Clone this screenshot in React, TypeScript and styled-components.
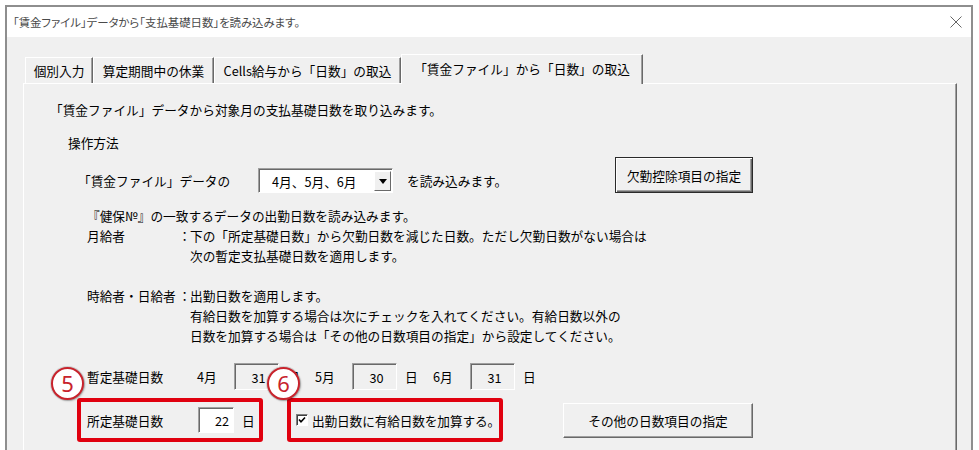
import React from "react";
import styled, { createGlobalStyle, css } from "styled-components";

const GlobalStyle = createGlobalStyle`
  html, body {
    margin: 0;
    padding: 0;
    background: #ffffff;
    width: 979px;
    height: 450px;
    overflow: hidden;
  }
  body {
    font-family: "Noto Sans CJK JP", "Noto Sans", sans-serif;
    color: #000;
  }
`;

const Page = styled.div`
  padding: 5px 6px 0 5px;
  height: 450px;
  box-sizing: border-box;
  overflow: hidden;
`;

const Window = styled.div`
  border: 2px solid #8e8e8e;
  border-bottom: none;
  height: 445px;
  display: flex;
  flex-direction: column;
  background: #f0f0f0;
  box-sizing: border-box;
`;

const TitleBar = styled.div`
  height: 30px;
  flex: none;
  background: #ffffff;
  display: flex;
  align-items: center;
  justify-content: space-between;
  padding: 0 9px 0 6px;
`;

const TitleText = styled.span`
  font-size: 11.4px;
  color: #4a4a4a;
  font-feature-settings: "palt";
  white-space: nowrap;
`;

const CloseIcon = () => (
  <svg width="12" height="12" viewBox="0 0 12 12">
    <path d="M0.5 0.5 L11.5 11.5 M11.5 0.5 L0.5 11.5" stroke="#666" strokeWidth="1" fill="none" />
  </svg>
);

const Body = styled.div`
  flex: 1;
  min-height: 0;
  padding: 17px 14px 0 16px;
  display: flex;
  flex-direction: column;
`;

const TabStrip = styled.div`
  display: flex;
  align-items: flex-end;
  height: 29px;
  flex: none;
  padding-left: 2px;
  position: relative;
  z-index: 1;
`;

const Tab = styled.div<{ $w: number; $active?: boolean }>`
  width: ${(p) => p.$w}px;
  height: ${(p) => (p.$active ? 30 : 26)}px;
  margin-bottom: ${(p) => (p.$active ? -1 : 0)}px;
  box-sizing: border-box;
  border-top: 1px solid #ffffff;
  border-left: 1px solid #ffffff;
  border-right: 1px solid #696969;
  box-shadow: inset -1px 0 #a0a0a0;
  background: #f0f0f0;
  font-size: 12.7px;
  display: flex;
  align-items: ${(p) => (p.$active ? "flex-start" : "center")};
  padding-top: ${(p) => (p.$active ? 4 : 0)}px;
  justify-content: center;
  white-space: nowrap;
`;

const Panel = styled.div`
  flex: 1;
  min-height: 0;
  width: 934px;
  box-sizing: border-box;
  border-top: 1px solid #ffffff;
  border-left: 1px solid #ffffff;
  border-right: 1px solid #696969;
  box-shadow: inset -1px 0 #a0a0a0;
  padding: 16px 0 0 26px;
  font-size: 12.7px;
`;

const Line = styled.div<{ $indent: number; $top?: number }>`
  margin-left: ${(p) => p.$indent}px;
  margin-top: ${(p) => p.$top ?? 0}px;
  height: 20px;
  line-height: 20px;
  white-space: nowrap;
`;

const SourceRow = styled.div`
  display: flex;
  align-items: flex-end;
  margin-left: 28px;
  margin-top: 4px;
  height: 36px;
`;

const InlineText = styled.span<{ $w?: number; $ml?: number }>`
  display: inline-block;
  ${(p) => (p.$w ? `width: ${p.$w}px;` : "")}
  margin-left: ${(p) => p.$ml ?? 0}px;
  height: 25px;
  line-height: 25px;
  white-space: nowrap;
`;

const Dropdown = styled.div`
  width: 135px;
  height: 25px;
  box-sizing: border-box;
  border-top: 1px solid #a0a0a0;
  border-left: 1px solid #a0a0a0;
  border-right: 1px solid #ffffff;
  border-bottom: 1px solid #ffffff;
  box-shadow: inset 1px 1px #696969;
  background: #ffffff;
  display: flex;
  align-items: center;
  justify-content: space-between;
  padding: 1px 1px 0 13px;
`;

const DropButton = styled.div`
  width: 17px;
  height: 20px;
  box-sizing: border-box;
  background: #f0f0f0;
  border-top: 1px solid #ffffff;
  border-left: 1px solid #ffffff;
  border-right: 1px solid #696969;
  border-bottom: 1px solid #696969;
  display: flex;
  align-items: center;
  justify-content: center;
`;

const ArrowDown = () => (
  <svg width="8" height="5" viewBox="0 0 8 5">
    <path d="M0 0 L8 0 L4 5 Z" fill="#000" />
  </svg>
);

const Button = styled.div<{ $w: number; $h: number; $default?: boolean; $ml?: number }>`
  width: ${(p) => p.$w}px;
  height: ${(p) => p.$h}px;
  margin-left: ${(p) => p.$ml ?? 0}px;
  box-sizing: border-box;
  background: #f0f0f0;
  display: flex;
  align-items: center;
  justify-content: center;
  font-size: 12.7px;
  white-space: nowrap;
  ${(p) =>
    p.$default
      ? css`
          border: 1px solid #2a2a2a;
          box-shadow: inset 1px 1px #ffffff, inset -1px -1px #696969, inset -2px -2px #a0a0a0;
        `
      : css`
          border-top: 1px solid #ffffff;
          border-left: 1px solid #ffffff;
          border-right: 1px solid #696969;
          border-bottom: 1px solid #696969;
          box-shadow: inset -1px -1px #a0a0a0;
        `}
`;

const DescGrid = styled.div`
  display: grid;
  grid-template-columns: 92px 11px auto;
  grid-auto-rows: 20px;
  line-height: 20px;
  margin-left: 37px;
  margin-top: 13px;
  white-space: nowrap;
`;

const FullRow = styled.div`
  grid-column: 1 / 4;
`;

const Colon = styled.div`
  display: flex;
  justify-content: center;
  overflow: visible;
`;

const Cell = styled.div``;

const DaysRow = styled.div`
  display: flex;
  align-items: center;
  margin-left: 37px;
  margin-top: 17px;
  height: 27px;
  white-space: nowrap;
`;

const RowLabel = styled.span<{ $w: number }>`
  width: ${(p) => p.$w}px;
  flex: none;
`;

const Unit = styled.span<{ $w?: number }>`
  width: ${(p) => p.$w ?? 36}px;
  padding-left: 8px;
  box-sizing: border-box;
  flex: none;
`;

const NumBox = styled.div<{ $w: number; $h: number; $editable?: boolean }>`
  width: ${(p) => p.$w}px;
  height: ${(p) => p.$h}px;
  flex: none;
  box-sizing: border-box;
  border-top: 1px solid #a0a0a0;
  border-left: 1px solid #a0a0a0;
  border-right: 1px solid #ffffff;
  border-bottom: 1px solid #ffffff;
  box-shadow: inset 1px 1px #696969;
  background: ${(p) => (p.$editable ? "#ffffff" : "#f0f0f0")};
  display: flex;
  align-items: center;
  justify-content: ${(p) => (p.$editable ? "flex-end" : "center")};
  padding: 1px ${(p) => (p.$editable ? 4 : 0)}px 0 ${(p) => (p.$editable ? 0 : 4)}px;
`;

const FixedRow = styled.div`
  display: flex;
  align-items: center;
  margin-left: 27px;
  margin-top: 8px;
  white-space: nowrap;
`;

const RedFrame = styled.div<{ $w: number; $ml?: number; $pl: number }>`
  position: relative;
  width: ${(p) => p.$w}px;
  height: 44px;
  margin-left: ${(p) => p.$ml ?? 0}px;
  box-sizing: border-box;
  border: 4px solid #e0000f;
  border-radius: 3px;
  display: flex;
  align-items: center;
  padding-left: ${(p) => p.$pl}px;
`;

const Badge = styled.div<{ $left: number }>`
  position: absolute;
  left: ${(p) => p.$left}px;
  top: -35px;
  width: 29px;
  height: 29px;
  border-radius: 50%;
  background: #ffffff;
  border: 2px solid #c8232c;
  box-shadow: 0 0 0 1px rgba(0, 0, 0, 0.12), 1px 1px 2px rgba(0, 0, 0, 0.25);
  color: #c8232c;
  font-family: "Noto Sans", "Liberation Sans", sans-serif;
  font-size: 22px;
  line-height: 29px;
  text-align: center;
`;

const CheckBox = styled.div`
  width: 12px;
  height: 12px;
  flex: none;
  box-sizing: border-box;
  background: #ffffff;
  border-top: 1px solid #808080;
  border-left: 1px solid #808080;
  border-right: 1px solid #ffffff;
  border-bottom: 1px solid #ffffff;
  box-shadow: inset 1px 1px #404040;
  display: flex;
  align-items: center;
  justify-content: center;
`;

const CheckMark = () => (
  <svg width="8" height="8" viewBox="0 0 8 8">
    <path d="M1 3.5 L3 5.8 L7 1.5" stroke="#000" strokeWidth="1.6" fill="none" />
  </svg>
);

const CheckLabel = styled.span`
  margin-left: 4px;
  letter-spacing: -0.15px;
`;

const months = [
  { m: "4月", v: "31" },
  { m: "5月", v: "30" },
  { m: "6月", v: "31" },
];

export default function App() {
  return (
    <>
      <GlobalStyle />
      <Page>
        <Window>
          <TitleBar>
            <TitleText>「賃金ファイル」データから「支払基礎日数」を読み込みます。</TitleText>
            <CloseIcon />
          </TitleBar>
          <Body>
            <TabStrip>
              <Tab $w={68}>個別入力</Tab>
              <Tab $w={121}>算定期間中の休業</Tab>
              <Tab $w={187}>Cells給与から「日数」の取込</Tab>
              <Tab $w={242} $active>
                「賃金ファイル」から「日数」の取込
              </Tab>
            </TabStrip>
            <Panel>
              <Line $indent={0}>「賃金ファイル」データから対象月の支払基礎日数を取り込みます。</Line>
              <Line $indent={18} $top={13}>
                操作方法
              </Line>
              <SourceRow>
                <InlineText $w={180}>「賃金ファイル」データの</InlineText>
                <Dropdown>
                  <span>4月、5月、6月</span>
                  <DropButton>
                    <ArrowDown />
                  </DropButton>
                </Dropdown>
                <InlineText $w={208} $ml={14}>
                  を読み込みます。
                </InlineText>
                <Button $w={138} $h={36} $default>
                  欠勤控除項目の指定
                </Button>
              </SourceRow>
              <DescGrid>
                <FullRow>『健保№』の一致するデータの出勤日数を読み込みます。</FullRow>
                <Cell>月給者</Cell>
                <Colon>：</Colon>
                <Cell>下の「所定基礎日数」から欠勤日数を減じた日数。ただし欠勤日数がない場合は</Cell>
                <Cell />
                <Cell />
                <Cell>次の暫定支払基礎日数を適用します。</Cell>
                <FullRow />
                <Cell>時給者・日給者</Cell>
                <Colon>：</Colon>
                <Cell>出勤日数を適用します。</Cell>
                <Cell />
                <Cell />
                <Cell>有給日数を加算する場合は次にチェックを入れてください。有給日数以外の</Cell>
                <Cell />
                <Cell />
                <Cell>日数を加算する場合は「その他の日数項目の指定」から設定してください。</Cell>
              </DescGrid>
              <DaysRow>
                <RowLabel $w={110}>暫定基礎日数</RowLabel>
                {months.map((x) => (
                  <React.Fragment key={x.m}>
                    <RowLabel $w={37}>{x.m}</RowLabel>
                    <NumBox $w={45} $h={27}>
                      {x.v}
                    </NumBox>
                    <Unit>日</Unit>
                  </React.Fragment>
                ))}
              </DaysRow>
              <FixedRow>
                <RedFrame $w={186} $pl={6}>
                  <Badge $left={-30}>5</Badge>
                  <RowLabel $w={111}>所定基礎日数</RowLabel>
                  <NumBox $w={36} $h={26} $editable>
                    22
                  </NumBox>
                  <Unit $w={30}>日</Unit>
                </RedFrame>
                <RedFrame $w={216} $ml={24} $pl={5}>
                  <Badge $left={-24}>6</Badge>
                  <CheckBox>
                    <CheckMark />
                  </CheckBox>
                  <CheckLabel>出勤日数に有給日数を加算する。</CheckLabel>
                </RedFrame>
                <Button $w={190} $h={35} $ml={60}>
                  その他の日数項目の指定
                </Button>
              </FixedRow>
            </Panel>
          </Body>
        </Window>
      </Page>
    </>
  );
}
